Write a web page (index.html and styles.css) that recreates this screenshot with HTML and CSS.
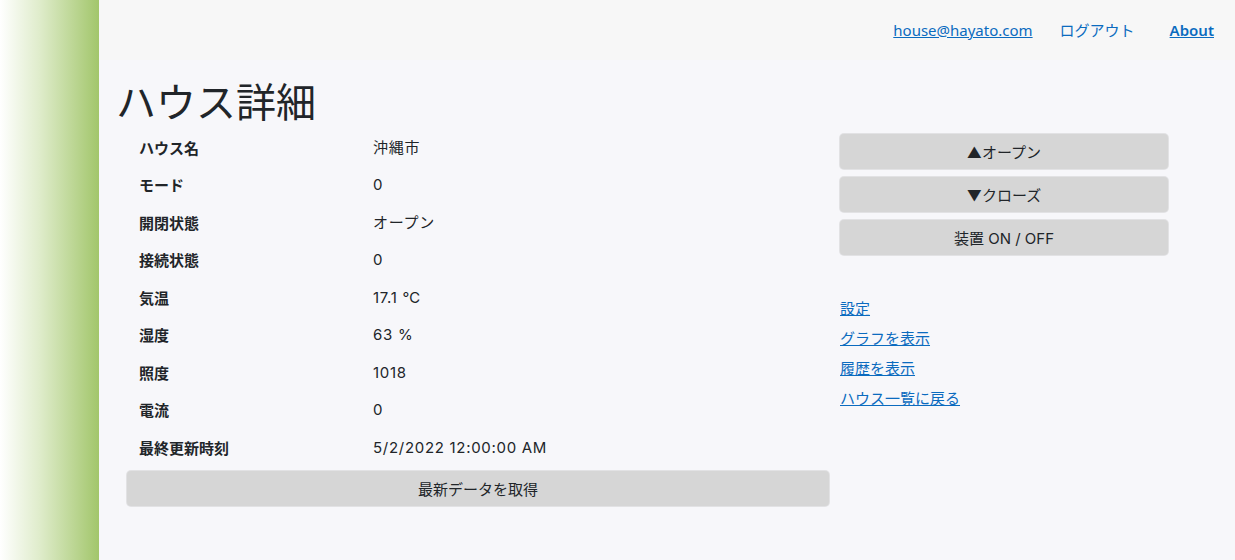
FILE: index.html
```html
<!DOCTYPE html>
<html lang="ja">
<head>
<meta charset="utf-8">
<title>ハウス詳細</title>
<link rel="stylesheet" href="styles.css">
</head>
<body>
<div class="page">
  <div class="sidebar"></div>
  <main class="main">
    <div class="top-row">
      <a class="top-link underline" href="#">house@hayato.com</a>
      <a class="top-link" href="#">ログアウト</a>
      <a class="top-link underline about" href="#">About</a>
    </div>
    <div class="content">
      <h1 class="title">ハウス詳細</h1>
      <div class="cols">
        <div class="left">
          <table class="detail">
            <tr><th>ハウス名</th><td>沖縄市</td></tr>
            <tr><th>モード</th><td>0</td></tr>
            <tr><th>開閉状態</th><td>オープン</td></tr>
            <tr><th>接続状態</th><td>0</td></tr>
            <tr><th>気温</th><td>17.1 ℃</td></tr>
            <tr><th>湿度</th><td>63 %</td></tr>
            <tr><th>照度</th><td>1018</td></tr>
            <tr><th>電流</th><td>0</td></tr>
            <tr><th>最終更新時刻</th><td>5/2/2022 12:00:00 AM</td></tr>
          </table>
          <button class="btn wide">最新データを取得</button>
        </div>
        <div class="right">
          <div class="btns">
            <button class="btn">▲オープン</button>
            <button class="btn">▼クローズ</button>
            <button class="btn">装置 ON / OFF</button>
          </div>
          <ul class="links">
            <li><a href="#">設定</a></li>
            <li><a href="#">グラフを表示</a></li>
            <li><a href="#">履歴を表示</a></li>
            <li><a href="#">ハウス一覧に戻る</a></li>
          </ul>
        </div>
      </div>
    </div>
  </main>
</div>
</body>
</html>
```
FILE: styles.css
```css
html, body {
  margin: 0;
  padding: 0;
  height: 100%;
}
body {
  font-family: "Inter", "Noto Sans CJK JP", sans-serif;
  color: #212529;
  background: #f7f7fa;
  font-size: 15px;
}
.page {
  display: flex;
  height: 560px;
  overflow: hidden;
}
.sidebar {
  width: 99px;
  flex: 0 0 99px;
  background: linear-gradient(90deg, #ffffff 0%, #dfeccb 40%, #a2c66b 100%);
}
.main {
  flex: 1;
  display: flex;
  flex-direction: column;
}
.top-row {
  height: 60px;
  background: #f7f7f7;
  display: flex;
  justify-content: flex-end;
  align-items: center;
  padding-right: 21px;
  box-sizing: border-box;
  font-family: "Noto Sans", "Noto Sans CJK JP", sans-serif;
}
.top-link {
  color: #0b6bbf;
  text-decoration: none;
  font-size: 15px;
  margin-left: 27px;
  line-height: 1;
}
.top-link.underline {
  text-decoration: underline;
}
.top-link.about {
  margin-left: 35px;
  font-weight: 600;
}
.content {
  padding: 0 0 0 17px;
}
.title {
  font-family: "Noto Sans CJK JP", sans-serif;
  font-size: 40px;
  font-weight: 400;
  line-height: 48px;
  margin: 16px 0 5px 0;
}
.cols {
  display: flex;
  padding-left: 11px;
}
.left {
  width: 702px;
  flex: 0 0 702px;
}
.right {
  width: 328px;
  margin-left: 11px;
  padding-top: 5px;
}
.detail {
  border-collapse: collapse;
  width: 100%;
}
.detail th, .detail td {
  padding: 7.5px 12px;
  line-height: 22.5px;
  text-align: left;
  vertical-align: top;
  font-size: 15px;
}
.detail td {
  letter-spacing: 0.7px;
}
.detail th {
  width: 210px;
  font-weight: 700;
  font-family: "Noto Sans CJK JP", sans-serif;
}
.btn {
  display: block;
  width: 100%;
  height: 35px;
  border: none;
  border-radius: 4px;
  background: #d6d6d6;
  color: #212529;
  font-family: inherit;
  font-size: 15px;
  padding: 0;
  box-shadow: 0 0 0 1px #e2e2e4;
}
.btn.wide {
  margin-top: 4px;
}
.btns {
  display: flex;
  flex-direction: column;
  gap: 8px;
}
.links {
  list-style: none;
  margin: 38px 0 0 0;
  padding: 0;
  font-family: "Noto Sans CJK JP", sans-serif;
}
.links li {
  height: 30px;
  line-height: 30px;
}
.links a {
  color: #0b6bbf;
  text-decoration: underline;
  font-size: 15px;
}
```
